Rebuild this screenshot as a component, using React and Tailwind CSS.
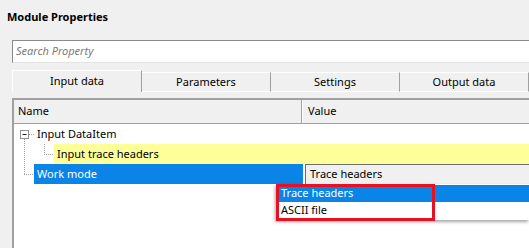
import React from "react";

const tabs = ["Input data", "Parameters", "Settings", "Output data"];

function TreeLines() {
    return (
        <svg className="absolute left-0 top-0" width="60" height="60" viewBox="0 0 60 60">
            <g stroke="#a0a0a0" strokeWidth="1" strokeDasharray="1 1" fill="none">
                <line x1="10.5" y1="15" x2="10.5" y2="50" />
                <line x1="10" y1="50.5" x2="20" y2="50.5" />
                <line x1="15" y1="10.5" x2="21" y2="10.5" />
                <line x1="30.5" y1="20" x2="30.5" y2="30" />
                <line x1="30" y1="30.5" x2="40" y2="30.5" />
            </g>
            <rect x="6.5" y="6.5" width="8" height="8" fill="#fff" stroke="#919191" />
            <line x1="8.5" y1="10.5" x2="12.5" y2="10.5" stroke="#1e1e1e" />
        </svg>
    );
}

export default function App() {
    return (
        <div
            className="relative w-[529px] h-[248px] overflow-hidden bg-[#f0f0f0] text-[11px] text-black flex flex-col"
            style={{ fontFamily: '"Noto Sans", "Liberation Sans", sans-serif' }}
        >
            <div className="h-[40px] pl-[7px] pt-[8px] font-bold leading-[18px]">Module Properties</div>

            <div className="ml-[12px] h-[23px] bg-white border-t border-l border-[#8a8a8a] border-b border-b-[#e3e3e3] flex items-center pl-[3px] italic text-[#7a7a7a]">
                Search Property
            </div>

            {/* tabs */}
            <div className="ml-[12px] mt-[7px] h-[22px] flex">
                {tabs.map((t, i) =>
                    i === 0 ? (
                        <div key={t} className="flex-1 border-t border-l border-white border-r border-r-[#a0a0a0] flex items-center justify-center">
                            {t}
                        </div>
                    ) : (
                        <div key={t} className="flex-1 mt-[2px] h-[20px] border-t border-b border-white border-r border-r-[#a0a0a0] flex items-center justify-center">
                            {t}
                        </div>
                    )
                )}
            </div>

            {/* property grid */}
            <div className="ml-[12px] mt-[6px] flex-1 border-t-2 border-l-2 border-[#a0a0a0] bg-white flex flex-col">
                <div className="h-[24px] bg-[#f0f0f0] border-b border-[#a0a0a0] flex">
                    <div className="w-[288px] pl-[4px] flex items-center border-r border-[#a0a0a0]">Name</div>
                    <div className="flex-1 pl-[5px] flex items-center border-l border-white">Value</div>
                </div>

                <div className="relative flex flex-col">
                    <TreeLines />
                    <div className="h-[20px] flex items-center pl-[23px]">Input DataItem</div>
                    <div className="h-[20px] flex pl-[40px]">
                        <div className="flex-1 bg-[#ffff99] flex items-center pl-[3px]">Input trace headers</div>
                    </div>
                    <div className="h-[20px] flex">
                        <div className="ml-[20px] w-[269px] bg-[#0a84e6] text-white flex items-center pl-[3px]">Work mode</div>
                        <div className="ml-[2px] flex-1 bg-[#f0f0f0] border-t border-l border-[#6d6d6d] flex items-center pl-[4px]">
                            Trace headers
                        </div>
                    </div>
                </div>
            </div>

            {/* open dropdown */}
            <div className="absolute left-[276px] top-[184px] w-[253px] h-[36px] bg-white shadow-[-1px_2px_3px_rgba(0,0,0,0.35)] flex flex-col pt-[1px]">
                <div className="h-[17px] ml-[3px] bg-[#0a84e6] text-white flex items-center pl-[2px]">Trace headers</div>
                <div className="h-[17px] ml-[3px] flex items-center pl-[2px]">ASCII file</div>
            </div>
            <div className="absolute left-[276px] top-[184px] w-[159px] h-[37px] border-[3px] border-[#e81123]" />
        </div>
    );
}
